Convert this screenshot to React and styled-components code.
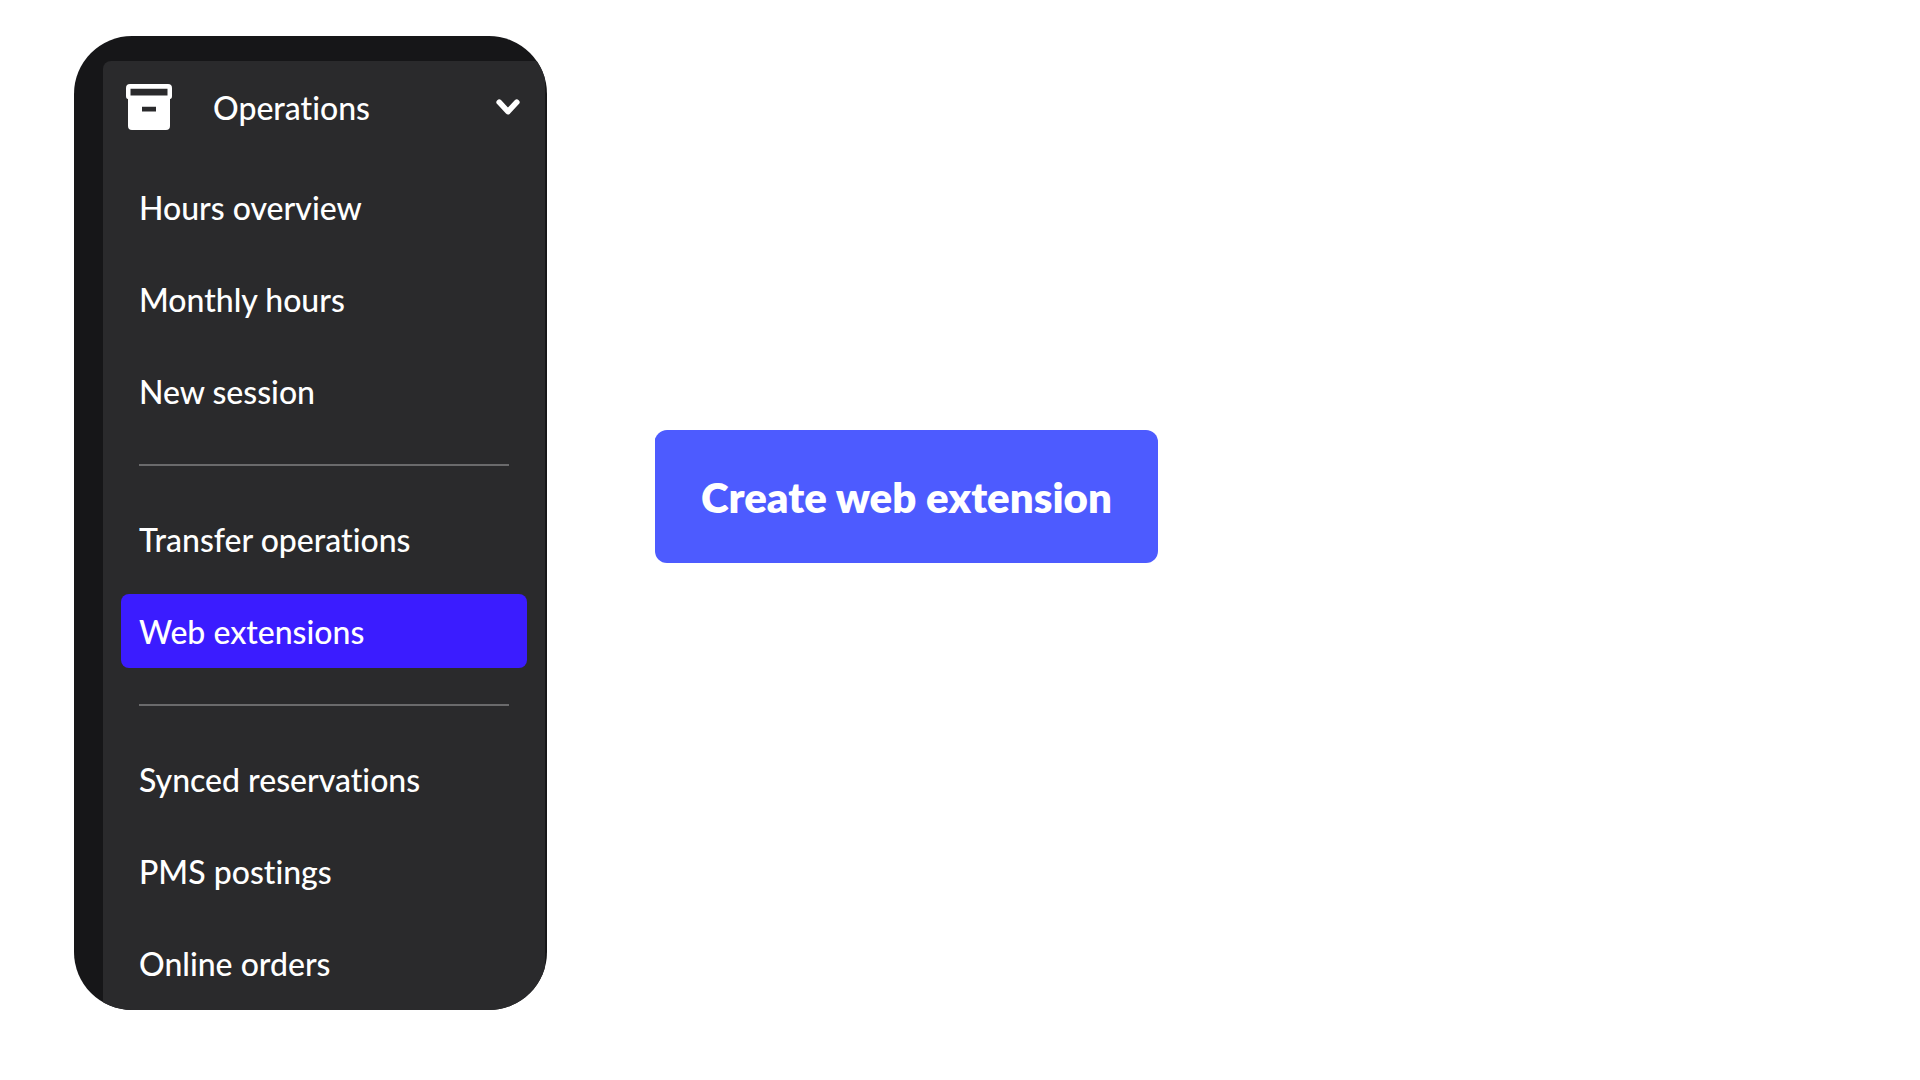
import React from 'react'
import styled, { createGlobalStyle } from 'styled-components'

const GROUPS = [
  ['Hours overview', 'Monthly hours', 'New session'],
  ['Transfer operations', 'Web extensions'],
  ['Synced reservations', 'PMS postings', 'Online orders'],
]

class App extends React.Component {
  state = { open: true, active: 'Web extensions' }

  toggle = () => this.setState(({ open }) => ({ open: !open }))

  select = (event, active) => {
    event.preventDefault()
    this.setState({ active })
  }

  render() {
    const { open, active } = this.state

    return (
      <>
        <GlobalStyle />
        <Page>
          <Sidebar>
            <Menu>
              <MenuHeader type="button" aria-expanded={open} onClick={this.toggle}>
                <ArchiveIcon />
                <MenuTitle>Operations</MenuTitle>
                <Chevron $open={open} />
              </MenuHeader>

              {open &&
                GROUPS.map(items => (
                  <Group key={items[0]}>
                    {items.map(item => (
                      <li key={item}>
                        <MenuLink
                          href="#"
                          $active={item === active}
                          aria-current={item === active ? 'page' : undefined}
                          onClick={event => this.select(event, item)}
                        >
                          {item}
                        </MenuLink>
                      </li>
                    ))}
                  </Group>
                ))}
            </Menu>
          </Sidebar>

          <Content>
            <CreateButton type="button">Create web extension</CreateButton>
          </Content>
        </Page>
      </>
    )
  }
}

const ArchiveIcon = () => (
  <ArchiveSvg viewBox="0 0 46 46" aria-hidden="true">
    <path
      fill="#fff"
      fillRule="evenodd"
      d="M4 0H42Q46 0 46 4V12Q46 15 44 15V42Q44 46 40 46H6Q2 46 2 42V15Q0 15 0 12V4Q0 0 4 0ZM4.5 4.8V11.5H41.5V4.8ZM16 22.8V27.4H30V22.8Z"
    />
  </ArchiveSvg>
)

const Chevron = ({ $open }) => (
  <ChevronSvg viewBox="0 0 24 16" $open={$open} aria-hidden="true">
    <path
      d="M3.2 3.2L12 12.6L20.8 3.2"
      fill="none"
      stroke="#fff"
      strokeWidth="5.6"
      strokeLinecap="round"
      strokeLinejoin="round"
    />
  </ChevronSvg>
)

const GlobalStyle = createGlobalStyle`
  *, *::before, *::after {
    box-sizing: border-box;
  }

  body {
    margin: 0;
    background: #fff;
    font-family: Lato, sans-serif;
    font-variant-ligatures: none;
  }
`

const Page = styled.div`
  display: flex;
  align-items: flex-start;
  gap: 108px;
  min-height: 100vh;
  padding: 36px 74px;
`

const Sidebar = styled.nav`
  flex: 0 0 473px;
  overflow: hidden;
  padding: 25px 2px 0 29px;
  border-radius: 58px;
  background: #161618;
`

const Menu = styled.div`
  padding: 0 18px 10px;
  border-top-left-radius: 8px;
  background: #2a2a2c;
`

const MenuHeader = styled.button`
  display: flex;
  align-items: center;
  width: 100%;
  height: 91px;
  margin-bottom: 18px;
  padding: 0 7px 0 5px;
  border: 0;
  background: none;
  color: #fff;
  font: inherit;
  font-size: 32px;
  font-weight: 500;
  font-variant-ligatures: none;
  line-height: 40px;
  text-align: left;
  cursor: pointer;
`

const MenuTitle = styled.span`
  flex: 1;
  padding: 2px 0 0 41px;
`

const ArchiveSvg = styled.svg`
  flex-shrink: 0;
  width: 46px;
  height: 46px;
`

const ChevronSvg = styled.svg`
  flex-shrink: 0;
  width: 24px;
  height: 16px;
  transform: ${({ $open }) => ($open ? 'none' : 'rotate(-90deg)')};
`

const Group = styled.ul`
  display: flex;
  flex-direction: column;
  gap: 18px;
  margin: 0;
  padding: 0;
  list-style: none;

  & + &::before {
    content: '';
    height: 2px;
    margin: 36px 18px 18px;
    background: #6a6a6c;
  }
`

const MenuLink = styled.a`
  display: block;
  padding: 18px 18px 16px;
  border-radius: 8px;
  background: ${({ $active }) => ($active ? '#3b1cff' : 'transparent')};
  color: #fff;
  font-size: 32px;
  font-weight: 500;
  line-height: 40px;
  text-decoration: none;
`

const Content = styled.main`
  flex: 1;
  padding-top: 394px;
`

const CreateButton = styled.button`
  position: relative;
  padding: 43px 46px 41px;
  border: 0;
  border-radius: 12px;
  background: #4d5bff;
  color: #fff;
  font: inherit;
  font-size: 42px;
  font-weight: 800;
  line-height: 49px;
  cursor: pointer;

  /* squares off the lower half of the top left corner */
  &::before {
    content: '';
    position: absolute;
    top: 6px;
    left: 0;
    width: 12px;
    height: 12px;
    border-top-left-radius: 4px;
    background: inherit;
  }
`

export default App
